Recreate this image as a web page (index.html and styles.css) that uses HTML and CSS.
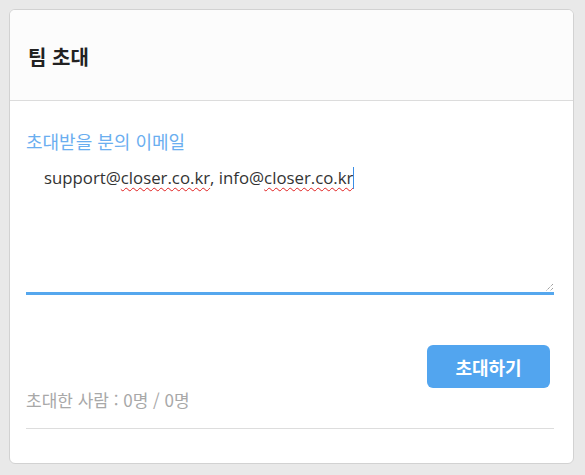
FILE: index.html
```html
<!DOCTYPE html>
<html lang="ko">
<head>
<meta charset="utf-8">
<link rel="stylesheet" href="styles.css">
</head>
<body>
<div class="card">
  <div class="card-header">
    <h2 class="title">팀 초대</h2>
  </div>
  <div class="card-body">
    <div class="label">초대받을 분의 이메일</div>
    <div class="textarea">
      <div class="text">support@<span class="err">closer.co.kr</span>, info@<span class="err">closer.co.kr</span><span class="caret"></span></div>
      <svg class="grip" width="9" height="9" viewBox="0 0 9 9"><path d="M8 1 L1 8 M8 5 L5 8" stroke="#777" stroke-width="1" stroke-dasharray="1 1" fill="none"/></svg>
    </div>
    <div class="actions">
      <span class="count">초대한 사람 : 0명 / 0명</span>
      <button class="btn">초대하기</button>
    </div>
    <div class="divider"></div>
  </div>
</div>
</body>
</html>
```
FILE: styles.css
```css
html, body {
  margin: 0;
  padding: 0;
}
body {
  background: #e9e9e9;
  padding: 9px 11px 10px 9px;
  font-family: "Open Sans", "Noto Sans CJK KR", sans-serif;
}
.card {
  width: 563px;
  height: 453px;
  background: #fff;
  border: 1px solid #d2d2d2;
  border-radius: 6px;
  overflow: hidden;
}
.card-header {
  height: 90px;
  background: #fcfcfc;
  border-bottom: 1px solid #dcdcdc;
  display: flex;
  align-items: center;
  padding-left: 18px;
}
.title {
  margin: 0;
  font-family: "Noto Sans CJK KR", sans-serif;
  font-size: 20px;
  font-weight: 700;
  color: #222;
  padding-top: 2px;
}
.card-body {
  padding: 0 19px 0 16px;
}
.label {
  margin-top: 28px;
  font-family: "Noto Sans CJK KR", sans-serif;
  font-size: 18px;
  font-weight: 400;
  color: #6aaef0;
  line-height: 24px;
}
.textarea {
  position: relative;
  height: 136px;
  margin-top: 6px;
  border-bottom: 3px solid #55a7ee;
  box-sizing: border-box;
}
.text {
  padding: 7px 0 0 18px;
  font-size: 16.8px;
  color: #333;
  line-height: 24px;
}
.err {
  text-decoration: underline wavy #e02020;
  text-decoration-thickness: 1px;
  text-underline-offset: 3px;
}
.caret {
  display: inline-block;
  width: 1px;
  height: 22px;
  background: #3a8ee6;
  vertical-align: -5px;
}
.grip {
  position: absolute;
  right: 0;
  bottom: 0;
}
.actions {
  display: flex;
  justify-content: space-between;
  align-items: flex-start;
  margin-top: 50px;
  height: 83px;
  padding-right: 4px;
}
.count {
  margin-top: 43px;
  font-family: "Noto Sans CJK KR", sans-serif;
  font-size: 17px;
  color: #a8a8a8;
  line-height: 24px;
}
.btn {
  width: 123px;
  height: 43px;
  background: #52a5ef;
  border: none;
  border-radius: 6px;
  color: #fff;
  font-family: "Noto Sans CJK KR", sans-serif;
  font-size: 18px;
  font-weight: 700;
}
.divider {
  height: 1px;
  background: #dddddd;
}
```
